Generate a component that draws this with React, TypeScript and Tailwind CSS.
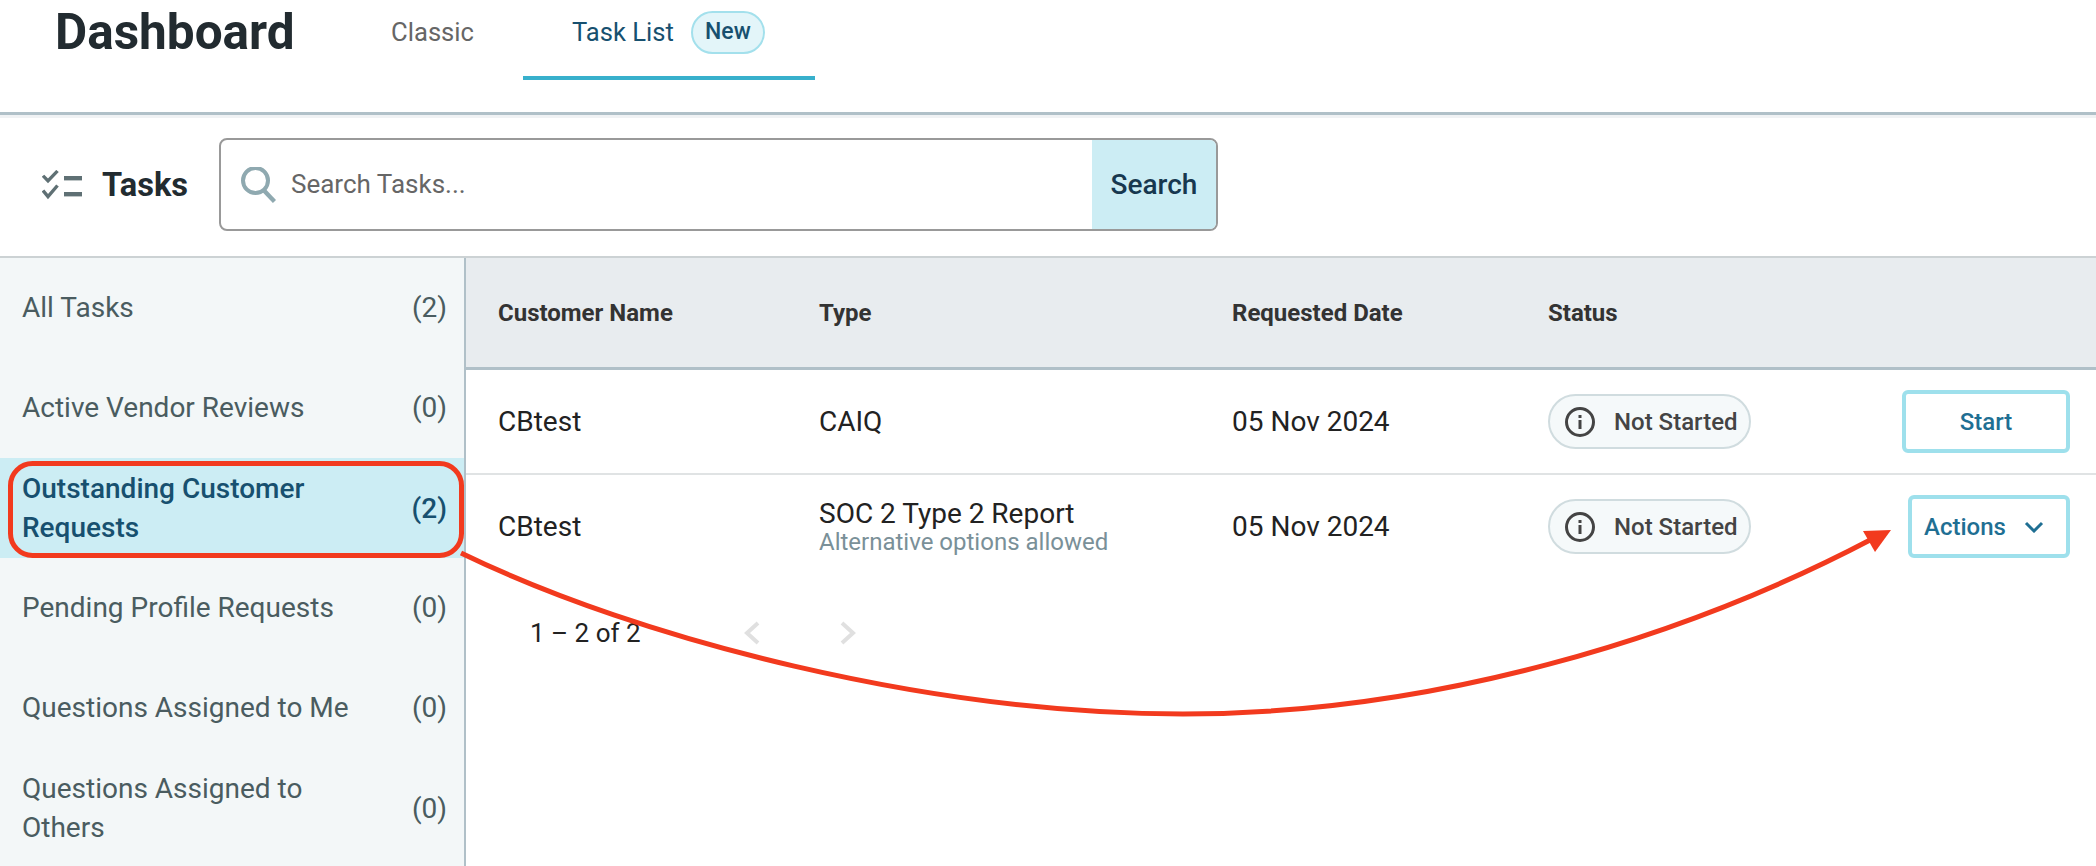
import React from 'react'

const sideItems = [
  { label: 'All Tasks', count: 2, oneLine: true },
  { label: 'Active Vendor Reviews', count: 0, oneLine: true },
  { label: 'Outstanding Customer Requests', count: 2, active: true },
  { label: 'Pending Profile Requests', count: 0, oneLine: true },
  { label: 'Questions Assigned to Me', count: 0, oneLine: true },
  { label: 'Questions Assigned to Others', count: 0 },
]

function ChecklistIcon() {
  return (
    <svg width="40" height="30" viewBox="0 0 40 30" fill="none" className="shrink-0">
      <path d="M1 5.5 L6 11 L15.5 0.5" stroke="#5f7074" strokeWidth="3.4" transform="translate(0 0.5) scale(1 0.95)" />
      <path d="M1 20.5 L6 26.5 L15.5 15.5" stroke="#5f7074" strokeWidth="3.4" />
      <rect x="22" y="6" width="18" height="4.4" fill="#5f7074" />
      <rect x="22" y="22" width="18" height="4.4" fill="#5f7074" />
    </svg>
  )
}

function SearchIcon() {
  return (
    <svg width="36" height="36" viewBox="0 0 36 36" fill="none" className="shrink-0">
      <circle cx="15.5" cy="13.5" r="12.5" stroke="#8fa9b0" strokeWidth="4" />
      <path d="M24 23.5 L34.5 34.5" stroke="#8fa9b0" strokeWidth="4.4" />
    </svg>
  )
}

function InfoIcon() {
  return (
    <svg width="30" height="30" viewBox="0 0 30 30" fill="none" className="shrink-0">
      <circle cx="15" cy="15" r="13.5" stroke="#444444" strokeWidth="3" />
      <rect x="13.5" y="13" width="3" height="9" fill="#444444" />
      <rect x="13.5" y="8" width="3" height="3" fill="#444444" />
    </svg>
  )
}

function StatusChip() {
  return (
    <div className="flex h-[55px] w-[203px] items-center gap-[19px] rounded-[28px] border-2 border-[#d0dcdf] bg-[#f5f9fa] pl-[15px] text-[24px] font-medium text-[#444444]">
      <InfoIcon />
      <span>Not Started</span>
    </div>
  )
}

function Row({ type, note, action, last }: { type: string; note?: string; action: React.ReactNode; last?: boolean }) {
  return (
    <div
      className={
        last
          ? 'grid h-[103px] grid-cols-[322px_412px_316px_1fr] items-center pl-[32px] text-[28px] text-[#222222]'
          : 'grid h-[105px] grid-cols-[322px_412px_316px_1fr] items-center border-b-2 border-[#e0e3e4] pl-[32px] text-[28px] text-[#222222]'
      }
    >
      <div>CBtest</div>
      <div className="-ml-[1px]">
        <div className="leading-[30px]">{type}</div>
        {note && <div className="text-[24px] leading-[26px] text-[#7a9098]">{note}</div>}
      </div>
      <div>05 Nov 2024</div>
      <div className="flex items-center justify-between pr-[26px]">
        <StatusChip />
        {action}
      </div>
    </div>
  )
}

export default function App() {
  return (
    <div className="relative h-[866px] w-[2096px] overflow-hidden bg-white font-['Roboto',sans-serif]">
      {/* top bar */}
      <div className="flex h-[115px] items-start border-b-[3px] border-[#b0c0c8] pl-[55px]">
        <h1 className="mr-[50px] mt-[2px] w-[237px] whitespace-nowrap text-[49.5px] font-bold leading-[60px] text-[#222b30]">Dashboard</h1>
        <div className="flex h-[64px] w-[181px] items-center justify-center text-[25.6px] text-[#666666]">Classic</div>
        <div className="flex h-[80px] w-[292px] items-start border-b-4 border-[#38b0cc] pl-[49px]">
          <div className="flex h-[64px] items-center gap-[17px]">
            <span className="text-[25.6px] text-[#17506f]">Task List</span>
            <span className="flex h-[43px] w-[74px] items-center justify-center rounded-[22px] border-2 border-[#a3e0ec] bg-[#e3f5f9] text-[23px] font-medium text-[#17506f]">New</span>
          </div>
        </div>
      </div>

      {/* tasks + search row */}
      <div className="flex h-[143px] items-start border-t-[3px] border-[#f0f2f4] border-b-[2px] border-b-[#ccd2d4] pl-[42px] pt-[20px]">
        <div className="flex h-[93px] items-center">
          <ChecklistIcon />
          <span className="ml-[20px] mt-[2px] w-[85px] text-[32.6px] font-bold text-[#222b30]">Tasks</span>
        </div>
        <div className="ml-[32px] flex h-[93px] w-[999px] overflow-hidden rounded-[8px] border-2 border-[#999999]">
          <div className="flex flex-1 items-center pl-[19px]">
            <SearchIcon />
            <span className="ml-[15px] text-[26px] text-[#666666]">Search Tasks...</span>
          </div>
          <div className="flex w-[124px] items-center justify-center bg-[#ccedf4] text-[28px] font-medium text-[#17384f]">Search</div>
        </div>
      </div>

      <div className="flex h-[608px]">
        {/* sidebar */}
        <div className="w-[466px] shrink-0 border-r-2 border-[#b0c0c8] bg-[#f3f7f8]">
          {sideItems.map((item) => (
            <div
              key={item.label}
              className={
                item.active
                  ? 'flex h-[100px] items-center justify-between bg-[#ccedf4] pl-[22px] pr-[17px] text-[28px] font-medium leading-[39px] text-[#17506f]'
                  : item.oneLine
                    ? 'flex h-[100px] items-center justify-between pb-[2px] pl-[22px] pr-[17px] text-[28px] leading-[39px] text-[#4a5c60]'
                    : 'flex h-[100px] items-center justify-between pl-[22px] pr-[17px] text-[28px] leading-[39px] text-[#4a5c60]'
              }
            >
              <div className="w-[340px]">{item.label}</div>
              <div>({item.count})</div>
            </div>
          ))}
        </div>

        {/* table */}
        <div className="flex-1">
          <div className="grid h-[112px] grid-cols-[322px_412px_316px_1fr] items-center border-b-[3px] border-[#b0c0c8] bg-[#e8ecef] pl-[32px] text-[24px] font-bold text-[#333333]">
            <div>Customer Name</div>
            <div className="-ml-[1px]">Type</div>
            <div>Requested Date</div>
            <div>Status</div>
          </div>
          <Row
            type="CAIQ"
            action={
              <div className="flex h-[63px] w-[168px] items-center justify-center rounded-[6px] border-4 border-[#9ee0ec] text-[24px] font-medium text-[#1f6f93]">Start</div>
            }
          />
          <Row
            last
            type="SOC 2 Type 2 Report"
            note="Alternative options allowed"
            action={
              <div className="flex h-[63px] w-[162px] items-center gap-[18px] rounded-[6px] border-4 border-[#9ee0ec] pl-[12px] text-[24px] font-medium text-[#1f6f93]">
                <span>Actions</span>
                <svg width="20" height="12" viewBox="0 0 20 12" fill="none">
                  <path d="M2 2 L10 10 L18 2" stroke="#1f6f93" strokeWidth="3" />
                </svg>
              </div>
            }
          />
          <div className="flex h-[110px] items-center pl-[64px] text-[26px] text-[#222222]">
            <span className="w-[213px]">1 – 2 of 2</span>
            <svg width="18" height="24" viewBox="0 0 18 24" fill="none">
              <path d="M15 2 L4 12 L15 22" stroke="#e0e0e0" strokeWidth="4" />
            </svg>
            <svg width="18" height="24" viewBox="0 0 18 24" fill="none" className="ml-[78px]">
              <path d="M3 2 L14 12 L3 22" stroke="#e0e0e0" strokeWidth="4" />
            </svg>
          </div>
        </div>
      </div>

      {/* annotation drawn over the page */}
      <svg width="2096" height="866" viewBox="0 0 2096 866" fill="none" className="pointer-events-none absolute left-0 top-0">
        <rect x="10.5" y="463.5" width="451" height="92" rx="22" stroke="#f23a1e" strokeWidth="5" />
        <path d="M461 553 C 640 640, 930 714, 1183 714 C 1430 714, 1680 640, 1872 539" stroke="#f23a1e" strokeWidth="5" />
        <path d="M1863 531 L1891 530 L1875 552 Z" fill="#f23a1e" />
      </svg>
    </div>
  )
}
